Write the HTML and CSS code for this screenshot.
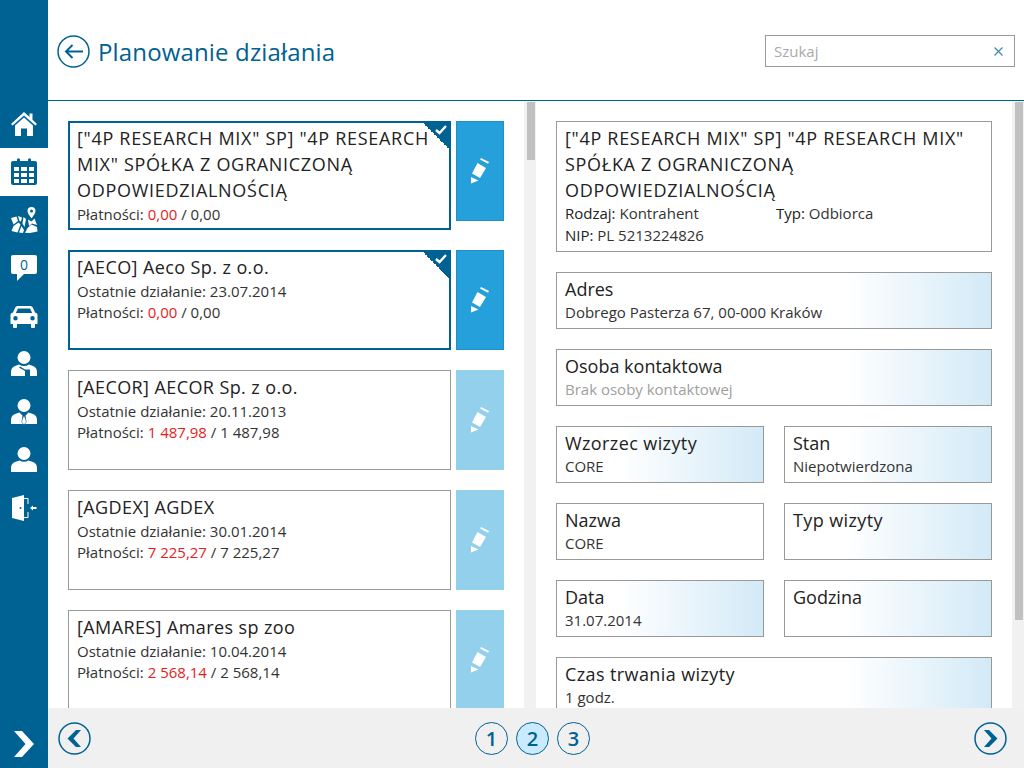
FILE: index.html
```html
<!DOCTYPE html>
<html lang="pl">
<head>
    <meta charset="UTF-8">
    <title>Planowanie działania</title>
    <link rel="stylesheet" href="styles.css">
</head>
<body>
    <nav class="sidebar">
        <div class="nav-items">
            <a class="nav-item">
                <svg width="28" height="28" viewBox="0 0 28 28"><path fill="currentColor" d="M14 2 L19.5 7 V3.5 H22.5 V9.8 L27 14 L25.4 15.6 L14 5.4 L2.6 15.6 L1 14 Z M5 15.4 L14 7.4 L23 15.4 V26 H17 V18.5 H11 V26 H5 Z"/></svg>
            </a>
            <a class="nav-item active">
                <svg width="28" height="28" viewBox="0 0 28 28"><path fill="currentColor" fill-rule="evenodd" d="M3 3 H7 V1.5 Q7 0.5 8 0.5 H9 Q10 0.5 10 1.5 V3 H18 V1.5 Q18 0.5 19 0.5 H20 Q21 0.5 21 1.5 V3 H25 Q27 3 27 5 V25 Q27 27 25 27 H3 Q1 27 1 25 V5 Q1 3 3 3 Z M4 9 V13 H9 V9 Z M11 9 V13 H17 V9 Z M19 9 V13 H24 V9 Z M4 15 V19 H9 V15 Z M11 15 V19 H17 V15 Z M19 15 V19 H24 V15 Z M4 21 V25 H9 V21 Z M11 21 V25 H17 V21 Z M19 21 V25 H24 V21 Z"/></svg>
            </a>
            <a class="nav-item">
                <svg width="28" height="28" viewBox="0 0 28 28"><path fill="currentColor" fill-rule="evenodd" d="M21.5 1 A4 4 0 0 1 25.5 5 C25.5 7.500 23 10 21.5 12.500 C20 10 17.500 7.500 17.500 5 A4 4 0 0 1 21.500 1 Z M21.500 3.500 A1.500 1.500 0 1 0 21.500 6.500 A1.500 1.500 0 1 0 21.500 3.500 Z M1 12 L6.500 10.500 L8 15 L3.500 18.500 Z M8 10 L12 11.500 L11 15.500 L9.500 15 Z M13.500 11 L16 13 L14.500 21 L12.500 17.500 Z M18 13.500 L21.500 15.500 L24.500 12.500 L27 19 L22 17.500 L19 20 Z M3.500 20 L8.500 16.500 L10.500 18.500 L7.500 26.500 L1.500 25 Z M11.500 20 L14 24 L13 27 L9 26.500 Z M17.500 22 L21.500 18.500 L27 21 L27.500 25.500 L20 27 L15 27 Z"/></svg>
            </a>
            <a class="nav-item">
                <div class="bubble">0</div>
            </a>
            <a class="nav-item">
                <svg width="28" height="28" viewBox="0 0 28 28"><path fill="currentColor" fill-rule="evenodd" d="M7.500 4 H20.500 Q22 4 22.800 5.500 L25 10.500 L27 11.500 Q27.500 12 27.500 13 V22 H25 V25 Q25 26 24 26 H22 Q21 26 21 25 V22 H7 V25 Q7 26 6 26 H4 Q3 26 3 25 V22 H0.500 V13 Q0.500 12 1 11.500 L3 10.500 L5.200 5.500 Q6 4 7.500 4 Z M8 6.500 L5.800 11 H22.200 L20 6.500 Z M5.500 14 A2.200 2.200 0 1 0 5.500 18.400 A2.200 2.200 0 1 0 5.500 14 Z M22.500 14 A2.200 2.200 0 1 0 22.500 18.400 A2.200 2.200 0 1 0 22.500 14 Z"/></svg>
            </a>
            <a class="nav-item">
                <svg width="28" height="28" viewBox="0 0 28 28"><circle cx="14" cy="7.500" r="6.500" fill="currentColor"/><path fill="currentColor" fill-rule="evenodd" d="M1 26 V22 Q1 17.500 5 16 L9 14.500 Q14 17.500 19 14.500 L23 16 Q27 17.500 27 22 V26 H20 V19.500 L15 19.500 L10 16.500 L9 17.500 L15 21 V26 Z"/></svg>
            </a>
            <a class="nav-item">
                <svg width="28" height="28" viewBox="0 0 28 28"><circle cx="14" cy="7.500" r="6.500" fill="currentColor"/><path fill="currentColor" d="M1 26 V22 Q1 17.500 5 16 L9.500 14.500 L12.500 17.500 L11.500 24 L13 26 Z M27 26 V22 Q27 17.500 23 16 L18.500 14.500 L15.500 17.500 L16.500 24 L15 26 Z M14 18 L15.500 21.500 L16 24 L14 26.500 L12 24 L12.500 21.500 Z"/></svg>
            </a>
            <a class="nav-item">
                <svg width="28" height="28" viewBox="0 0 28 28"><circle cx="14" cy="7.500" r="6.500" fill="currentColor"/><path fill="currentColor" d="M1 26 V22 Q1 17.500 5 16 L9.500 14.500 Q14 17 18.500 14.500 L23 16 Q27 17.500 27 22 V26 Z"/></svg>
            </a>
            <a class="nav-item">
                <svg width="28" height="28" viewBox="0 0 28 28"><path fill="currentColor" fill-rule="evenodd" d="M2 4 L14 1 V27 L2 24 Z M10.500 13 A1 1 0 1 0 10.500 15 A1 1 0 1 0 10.500 13 Z"/><path fill="none" stroke="currentColor" d="M14 4.500 H18 V10 M18 18 V23.500 H14"/><path fill="currentColor" d="M20 14 L23 11.500 V13 H26.500 V15 H23 V16.500 Z"/></svg>
            </a>
        </div>
        <a class="nav-expand">
            <svg width="24" height="28" viewBox="0 0 24 28"><path fill="currentColor" d="M2 1 H10 L22 14 L10 27 H2 L13.500 14 Z"/></svg>
        </a>
    </nav>

    <div class="main">
        <header class="topbar">
            <div class="title">
                <svg class="round-icon" width="33" height="33" viewBox="0 0 33 33"><circle cx="16.500" cy="16.500" r="15.500" fill="none" stroke="currentColor" stroke-width="1.500"/><path fill="none" stroke="currentColor" stroke-width="2" d="M9 16.500 H26 M15.500 10 L9 16.500 L15.500 23"/></svg>
                <h1>Planowanie działania</h1>
            </div>
            <div class="search">
                <span class="search-text">Szukaj</span>
                <svg class="search-clear" width="9" height="9" viewBox="0 0 9 9"><path fill="none" stroke="currentColor" stroke-width="1.200" d="M0.500 0.500 L8.500 8.500 M8.500 0.500 L0.500 8.500"/></svg>
            </div>
        </header>

        <div class="panels">
            <section class="panel">
                <div class="panel-body list">
                    <div class="row row-tall">
                        <div class="card selected">
                            <div class="card-title caps">["4P RESEARCH MIX" SP] "4P RESEARCH MIX" SPÓŁKA Z OGRANICZONĄ ODPOWIEDZIALNOŚCIĄ</div>
                            <div class="card-line">Płatności: <span class="red">0,00</span> / 0,00</div>
                            <span class="corner"><svg width="12" height="10" viewBox="0 0 12 10"><path fill="none" stroke="#fff" stroke-width="2.400" d="M1 5 L4.500 8 L11 1"/></svg></span>
                        </div>
                        <a class="edit"><svg width="18" height="26" viewBox="0 0 18 26"><path fill="currentColor" d="M10 0 L18 4 L17 5.800 L9 1.500 Z M6.500 5 L15 10 L9 20 L1 15.500 Z M0 19 L7.500 22.500 L0 25.500 Z"/></svg></a>
                    </div>
                    <div class="row">
                        <div class="card selected">
                            <div class="card-title wide">[AECO] Aeco Sp. z o.o.</div>
                            <div class="card-line">Ostatnie działanie: 23.07.2014</div>
                            <div class="card-line">Płatności: <span class="red">0,00</span> / 0,00</div>
                            <span class="corner"><svg width="12" height="10" viewBox="0 0 12 10"><path fill="none" stroke="#fff" stroke-width="2.400" d="M1 5 L4.500 8 L11 1"/></svg></span>
                        </div>
                        <a class="edit"><svg width="18" height="26" viewBox="0 0 18 26"><path fill="currentColor" d="M10 0 L18 4 L17 5.800 L9 1.500 Z M6.500 5 L15 10 L9 20 L1 15.500 Z M0 19 L7.500 22.500 L0 25.500 Z"/></svg></a>
                    </div>
                    <div class="row">
                        <div class="card">
                            <div class="card-title wide">[AECOR] AECOR Sp. z o.o.</div>
                            <div class="card-line">Ostatnie działanie: 20.11.2013</div>
                            <div class="card-line">Płatności: <span class="red">1 487,98</span> / 1 487,98</div>
                        </div>
                        <a class="edit faded"><svg width="18" height="26" viewBox="0 0 18 26"><path fill="currentColor" d="M10 0 L18 4 L17 5.800 L9 1.500 Z M6.500 5 L15 10 L9 20 L1 15.500 Z M0 19 L7.500 22.500 L0 25.500 Z"/></svg></a>
                    </div>
                    <div class="row">
                        <div class="card">
                            <div class="card-title wide">[AGDEX] AGDEX</div>
                            <div class="card-line">Ostatnie działanie: 30.01.2014</div>
                            <div class="card-line">Płatności: <span class="red">7 225,27</span> / 7 225,27</div>
                        </div>
                        <a class="edit faded"><svg width="18" height="26" viewBox="0 0 18 26"><path fill="currentColor" d="M10 0 L18 4 L17 5.800 L9 1.500 Z M6.500 5 L15 10 L9 20 L1 15.500 Z M0 19 L7.500 22.500 L0 25.500 Z"/></svg></a>
                    </div>
                    <div class="row">
                        <div class="card">
                            <div class="card-title wide">[AMARES] Amares sp zoo</div>
                            <div class="card-line">Ostatnie działanie: 10.04.2014</div>
                            <div class="card-line">Płatności: <span class="red">2 568,14</span> / 2 568,14</div>
                        </div>
                        <a class="edit faded"><svg width="18" height="26" viewBox="0 0 18 26"><path fill="currentColor" d="M10 0 L18 4 L17 5.800 L9 1.500 Z M6.500 5 L15 10 L9 20 L1 15.500 Z M0 19 L7.500 22.500 L0 25.500 Z"/></svg></a>
                    </div>
                </div>
                <div class="scrollbar"><div class="thumb thumb-short"></div></div>
            </section>

            <section class="panel">
                <div class="panel-body details">
                    <div class="info">
                        <div class="card-title caps">["4P RESEARCH MIX" SP] "4P RESEARCH MIX"<br>SPÓŁKA Z OGRANICZONĄ<br>ODPOWIEDZIALNOŚCIĄ</div>
                        <div class="info-grid">
                            <div class="card-line"><span class="label">Rodzaj:</span> Kontrahent</div>
                            <div class="card-line"><span class="label">Typ:</span> Odbiorca</div>
                            <div class="card-line"><span class="label">NIP:</span> PL 5213224826</div>
                        </div>
                    </div>
                    <div class="field">
                        <div class="card-title">Adres</div>
                        <div class="card-line">Dobrego Pasterza 67, 00-000 Kraków</div>
                    </div>
                    <div class="field">
                        <div class="card-title">Osoba kontaktowa</div>
                        <div class="card-line muted">Brak osoby kontaktowej</div>
                    </div>
                    <div class="field-row">
                        <div class="field">
                            <div class="card-title wide">Wzorzec wizyty</div>
                            <div class="card-line">CORE</div>
                        </div>
                        <div class="field">
                            <div class="card-title">Stan</div>
                            <div class="card-line">Niepotwierdzona</div>
                        </div>
                    </div>
                    <div class="field-row">
                        <div class="field plain">
                            <div class="card-title">Nazwa</div>
                            <div class="card-line">CORE</div>
                        </div>
                        <div class="field">
                            <div class="card-title wide">Typ wizyty</div>
                        </div>
                    </div>
                    <div class="field-row">
                        <div class="field">
                            <div class="card-title">Data</div>
                            <div class="card-line">31.07.2014</div>
                        </div>
                        <div class="field">
                            <div class="card-title">Godzina</div>
                        </div>
                    </div>
                    <div class="field">
                        <div class="card-title wide">Czas trwania wizyty</div>
                        <div class="card-line">1 godz.</div>
                    </div>
                </div>
                <div class="scrollbar"><div class="thumb thumb-long"></div></div>
            </section>
        </div>

        <footer class="pager">
            <svg class="round-icon" width="33" height="33" viewBox="0 0 33 33"><circle cx="16.500" cy="16.500" r="15.500" fill="none" stroke="currentColor" stroke-width="1.500"/><path fill="currentColor" d="M18 8 H23 L15.500 16.500 L23 25 H18 L9.500 16.500 Z"/></svg>
            <div class="pages">
                <span class="page">1</span>
                <span class="page current">2</span>
                <span class="page">3</span>
            </div>
            <svg class="round-icon" width="33" height="33" viewBox="0 0 33 33"><circle cx="16.500" cy="16.500" r="15.500" fill="none" stroke="currentColor" stroke-width="1.500"/><path fill="currentColor" d="M10 8 H15 L23.500 16.500 L15 25 H10 L17.500 16.500 Z"/></svg>
        </footer>
    </div>
</body>
</html>
```

FILE: styles.css
```css
* {
    box-sizing: border-box;
}
body {
    margin: 0;
    width: 1024px;
    height: 768px;
    display: flex;
    overflow: hidden;
    background: #fff;
    color: #222;
    font-family: "Open Sans", "Noto Sans", sans-serif;
}

/* Pasek nawigacji */
.sidebar {
    width: 48px;
    flex-shrink: 0;
    background: #006193;
    color: #fff;
    display: flex;
    flex-direction: column;
    justify-content: space-between;
    padding-top: 100px;
}
.nav-item {
    height: 48px;
    display: flex;
    align-items: center;
    justify-content: center;
}
.nav-item.active {
    background: #fff;
    color: #006193;
}
.bubble {
    position: relative;
    width: 26px;
    height: 19px;
    margin-bottom: 8px;
    background: #fff;
    border-radius: 2px;
    color: #006193;
    font-size: 14px;
    line-height: 19px;
    text-align: center;
}
.bubble::after {
    content: "";
    position: absolute;
    left: 6px;
    top: 19px;
    border-top: 7px solid #fff;
    border-right: 7px solid transparent;
}
.nav-expand {
    height: 48px;
    display: flex;
    align-items: center;
    justify-content: center;
}

.main {
    flex: 1;
    min-width: 0;
    display: flex;
    flex-direction: column;
}

/* Nagłówek */
.topbar {
    height: 101px;
    flex-shrink: 0;
    display: flex;
    align-items: center;
    justify-content: space-between;
    padding: 2px 9px 0 9px;
    border-bottom: 1px solid #006193;
}
.title {
    display: flex;
    align-items: center;
    gap: 8px;
}
.title h1 {
    margin: 1px 0 0;
    font-size: 24px;
    font-weight: 400;
    letter-spacing: 0.15px;
    color: #006193;
}
.round-icon {
    color: #006193;
    flex-shrink: 0;
}
.search {
    width: 250px;
    height: 32px;
    border: 1px solid #999;
    display: flex;
    align-items: center;
    justify-content: space-between;
    padding: 0 11px 0 8px;
    font-size: 15px;
}
.search-text {
    color: #aaa;
}
.search-clear {
    color: #3d8aae;
}

/* Panele */
.panels {
    flex: 1;
    min-height: 0;
    display: flex;
}
.panel {
    flex: 1;
    min-width: 0;
    display: flex;
}
.panel-body {
    flex: 1;
    min-width: 0;
    overflow: hidden;
    padding: 20px 20px 0;
    display: flex;
    flex-direction: column;
    gap: 20px;
}
.scrollbar {
    width: 12px;
    flex-shrink: 0;
    background: #f1f1f1;
    padding: 1px 1px 0 3px;
}
.thumb {
    background: #c1c1c1;
}
.thumb-short {
    height: 58px;
}
.thumb-long {
    height: 518px;
}

/* Lista kontrahentów */
.row {
    display: flex;
    gap: 5px;
    height: 100px;
    flex-shrink: 0;
}
.row-tall {
    height: 109px;
}
.card {
    position: relative;
    flex: 1;
    min-width: 0;
    border: 1px solid #999;
    padding: 3px 8px;
}
.card.selected {
    border: 2px solid #006193;
    padding: 2px 7px;
}
.card-title {
    font-size: 18px;
    font-weight: 500;
    line-height: 26px;
    color: #222;
}
.card .card-title {
    margin-bottom: 1px;
}
.card-title.caps {
    letter-spacing: 0.7px;
}
.card-title.wide {
    letter-spacing: 0.4px;
}
.card-line {
    font-size: 15px;
    line-height: 21px;
    color: #333;
}
.red {
    color: #e81c1c;
}
.corner {
    position: absolute;
    top: 0;
    right: 0;
    width: 26px;
    height: 26px;
    background: linear-gradient(to top right, transparent 50%, #006193 50%);
}
.corner svg {
    position: absolute;
    top: 2px;
    right: 2px;
}
.edit {
    width: 48px;
    height: 100px;
    flex-shrink: 0;
    background: #26a0da;
    border: 1px solid #1f8fc6;
    color: #fff;
    display: flex;
    align-items: center;
    justify-content: center;
}
.edit.faded {
    background: #93d0ec;
    border-color: #93d0ec;
}

/* Szczegóły */
.info {
    border: 1px solid #999;
    padding: 3px 8px;
    height: 131px;
    flex-shrink: 0;
}
.info-grid {
    display: grid;
    grid-template-columns: 211px 1fr;
    margin-top: -1px;
}
.info-grid .card-line {
    line-height: 22px;
}
.label {
    color: #222;
}
.field {
    height: 57px;
    flex-shrink: 0;
    border: 1px solid #999;
    padding: 3px 8px;
    background: linear-gradient(to right, #fff calc(100% - 145px), #d3eaf7 100%);
}
.field.plain {
    background: #fff;
}
.field > .card-line {
    line-height: 20px;
}
.field-row {
    display: flex;
    gap: 20px;
    height: 57px;
    flex-shrink: 0;
}
.field-row .field {
    flex: 1;
    min-width: 0;
}
.muted {
    color: #a0a0a0;
}

/* Stronicowanie */
.pager {
    height: 60px;
    flex-shrink: 0;
    background: #f0f0f0;
    display: flex;
    align-items: center;
    justify-content: space-between;
    padding: 0 17px 0 10px;
}
.pages {
    display: flex;
    gap: 8px;
}
.page {
    width: 33px;
    height: 33px;
    border: 1.5px solid #006193;
    border-radius: 50%;
    color: #006193;
    font-size: 20px;
    font-weight: 600;
    display: flex;
    align-items: center;
    justify-content: center;
}
.page.current {
    background: #c8ebff;
}
```
